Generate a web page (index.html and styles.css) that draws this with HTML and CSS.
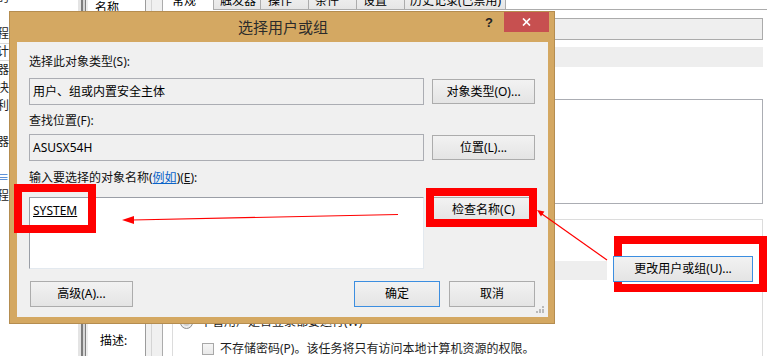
FILE: index.html
```html
<!DOCTYPE html>
<html>
<head>
<meta charset="utf-8">
<link rel="stylesheet" href="styles.css">
</head>
<body>
<div class="screen">
  <div class="bgwin">
    <div class="tree">
      <div class="trow">的</div>
      <div class="trow"></div>
      <div class="trow">程</div>
      <div class="trow sel">计</div>
      <div class="trow">器</div>
      <div class="trow">决</div>
      <div class="trow">利</div>
      <div class="trow"></div>
      <div class="trow">器</div>
      <div class="trow"></div>
      <div class="trow link">≡</div>
      <div class="trow">程</div>
    </div>
    <div class="split"></div>
    <div class="names">
      <div class="name-top">名称</div>
      <div class="name-bot">描述:</div>
    </div>
    <div class="vscroll"></div>
    <div class="props">
      <div class="tabs">
        <div class="tab active t1">常规</div>
        <div class="tab t2">触发器</div>
        <div class="tab t3">操作</div>
        <div class="tab t4">条件</div>
        <div class="tab t5">设置</div>
        <div class="tab t6">历史记录(已禁用)</div>
      </div>
      <div class="panel">
        <div class="field"></div>
        <div class="band"></div>
        <div class="box"></div>
        <div class="group">
          <div class="user-row">
            <div class="user-band"></div>
            <div class="btn change">更改用户或组(U)...</div>
          </div>
          <div class="opt radio-row"><span class="radio"></span><span>不管用户是否登录都要运行(W)</span></div>
          <div class="opt check-row"><span class="check"></span><span>不存储密码(P)。该任务将只有访问本地计算机资源的权限。</span></div>
        </div>
      </div>
    </div>
  </div>

  <div class="mark3"></div>

  <div class="dialog">
    <div class="titlebar">
      <div></div>
      <div class="title">选择用户或组</div>
      <div class="tb-controls">
        <span class="help">?</span>
        <span class="close"><svg width="9" height="8" viewBox="0 0 9 8"><path d="M1 0.5 L8 7.5 M8 0.5 L1 7.5" stroke="#fff" stroke-width="1.7"/></svg></span>
      </div>
    </div>
    <div class="dbody">
      <div class="lbl">选择此对象类型(S):</div>
      <div class="drow r1">
        <div class="tbox">用户、组或内置安全主体</div>
        <div class="btn">对象类型(O)...</div>
      </div>
      <div class="lbl lbl2">查找位置(F):</div>
      <div class="drow r2">
        <div class="tbox">ASUSX54H</div>
        <div class="btn">位置(L)...</div>
      </div>
      <div class="lbl lbl3">输入要选择的对象名称(<span class="lnk">例如</span>)(<u>E</u>):</div>
      <div class="drow r3">
        <div class="tarea"><span class="sys">SYSTEM</span></div>
        <div class="btn">检查名称(C)</div>
      </div>
      <div class="r4">
        <div class="btn adv">高级(A)...</div>
        <div class="btn ok">确定</div>
        <div class="btn cancel">取消</div>
      </div>
      <svg class="grip" width="9" height="7" viewBox="0 0 9 7">
        <rect x="6" y="0" width="2" height="2" fill="#b9b9b9"/>
        <rect x="3" y="3" width="2" height="2" fill="#b9b9b9"/>
        <rect x="6" y="3" width="2" height="2" fill="#b9b9b9"/>
        <rect x="0" y="5" width="2" height="2" fill="#b9b9b9"/>
        <rect x="3" y="5" width="2" height="2" fill="#b9b9b9"/>
        <rect x="6" y="5" width="2" height="2" fill="#b9b9b9"/>
      </svg>
    </div>
  </div>

  <svg class="annot" width="767" height="356" viewBox="0 0 767 356">
    <rect x="18" y="188" width="74" height="41" fill="none" stroke="#ff0000" stroke-width="8"/>
    <rect x="430" y="192" width="103" height="31" fill="none" stroke="#ff0000" stroke-width="8"/>
    <path d="M398 214.5 L132 220" stroke="#ff0000" stroke-width="1.2" fill="none"/>
    <polygon points="122,220 134,216 134,224" fill="#ff0000"/>
    <path d="M607 260 L542 214" stroke="#ff0000" stroke-width="1.2" fill="none"/>
    <polygon points="537,210 544.4,211.6 541,216.5" fill="#ff0000"/>
  </svg>
</div>
</body>
</html>
```

FILE: styles.css
```css
* { box-sizing: border-box; }
html, body { margin: 0; padding: 0; }
body {
  width: 767px;
  height: 356px;
  overflow: hidden;
  background: #fff;
  font-family: "Noto Sans", "Noto Sans CJK SC", sans-serif;
  font-size: 12px;
  color: #000;
}
.screen { position: relative; width: 767px; height: 356px; overflow: hidden; }

/* background window */
.bgwin { display: flex; height: 356px; }
.tree { width: 78px; flex: none; margin-top: -11px; overflow: hidden; }
.trow { height: 18px; line-height: 18px; margin-left: -3px; white-space: nowrap; color: #222; }
.trow.sel { border-top: 1px solid #dadada; border-bottom: 1px solid #dadada; line-height: 16px; }
.trow.link { color: #3a78d0; }
.split {
  width: 10px; flex: none;
  background: linear-gradient(to right, #e4e4e4 0 3px, #7d7d7d 3px 5px, #d6d6d6 5px 7px, #7d7d7d 7px 8px, #ededed 8px);
}
.names {
  width: 57px; flex: none;
  display: flex; flex-direction: column; justify-content: space-between;
  padding-bottom: 7px;
}
.name-top { line-height: 16px; padding-left: 7px; }
.name-bot { line-height: 16px; padding-left: 12px; }
.vscroll {
  width: 17px; flex: none;
  background: linear-gradient(to right, #f0f0f0 0 5px, #d4d4d4 5px 6px, #f0f0f0 6px);
  border-left: 1px solid #9c9c9c;
}
.props { flex: 1; display: flex; flex-direction: column; min-width: 0; }
.tabs { display: flex; height: 9px; align-items: flex-end; position: relative; z-index: 1; }
.tab {
  height: 19px; flex: none; line-height: 20px; padding-left: 6px; white-space: nowrap;
  background: linear-gradient(#f3f3f3, #e6e6e6);
  border: 1px solid #acacac; border-bottom: none; margin-right: -1px;
}
.tab.active { background: #fff; height: 20px; margin-bottom: -1px; position: relative; z-index: 1; }
.t1 { width: 52px; padding-left: 9px; }
.t2 { width: 48px; }
.t3 { width: 49px; padding-left: 7px; }
.t4 { width: 49px; }
.t5 { width: 49px; }
.t6 { width: 102px; padding-left: 5px; }
.panel {
  flex: 1;
  border-top: 1px solid #acacac; border-left: 1px solid #acacac;
  background: #fff;
  padding: 0 4px 0 9px;
  display: flex; flex-direction: column;
}
.field { margin-top: 8px; height: 22px; background: #efefef; border: 1px solid #ababab; flex: none; }
.band { margin-top: 7px; height: 20px; background: #eeeeee; flex: none; }
.box { margin-top: 32px; height: 105px; border: 1px solid #abadb3; flex: none; }
.group {
  margin-top: 15px; flex: 1;
  border: 1px solid #dcdcdc; border-bottom: none;
  padding: 36px 9px 0 7px;
}
.user-row { display: flex; align-items: flex-start; gap: 6px; height: 26px; }
.user-band { flex: 1; height: 19px; margin-top: 5px; background: #eeeeee; }
.opt { display: flex; align-items: center; height: 16px; line-height: 16px; color: #1e1e1e; white-space: nowrap; }
.radio-row { margin-top: 32px; gap: 7px; }
.radio {
  width: 13px; height: 13px; border-radius: 50%; flex: none;
  border: 1px solid #8c8c8c;
  background: radial-gradient(circle, #cfcfcf 0 3px, #ececec 4px);
}
.check-row { margin-top: 11px; padding-left: 22px; gap: 6px; }
.check { width: 12px; height: 12px; flex: none; border: 1px solid #a8a8a8; background: linear-gradient(#f6f6f6, #e9e9e9); }

/* buttons */
.btn {
  height: 25px;
  border: 1px solid #acacac;
  background: linear-gradient(#f2f2f2, #e4e4e4);
  display: flex; align-items: center; justify-content: center;
  line-height: 16px; white-space: nowrap; color: #000;
}
.btn.change { width: 140px; height: 26px; flex: none; border-color: #3c8ee0; position: relative; z-index: 2; }

/* annotation box under the change button */
.mark3 {
  position: absolute; left: 614px; top: 236px; width: 153px; height: 56px;
  border: 8px solid #ff0000; z-index: 1;
}

/* dialog */
.dialog {
  position: absolute; left: 9px; top: 11px; width: 546px; height: 313px; z-index: 3;
  background: #d4a862;
  border: 1px solid #b58d50;
  padding: 0 6px 6px 7px;
  display: flex; flex-direction: column;
}
.titlebar { height: 30px; flex: none; display: grid; grid-template-columns: 1fr auto 1fr; margin-right: -1px; }
.title {
  font-family: "Noto Sans CJK SC", sans-serif;
  font-size: 15px; line-height: 29px; color: #2b2b2b;
}
.tb-controls { display: flex; justify-content: flex-end; align-items: flex-start; }
.help {
  font-family: "Liberation Sans", sans-serif;
  font-weight: bold; font-size: 13px; line-height: 20px;
  margin-right: 11px; margin-top: 1px; color: #222;
}
.close {
  width: 45px; height: 20px; background: #c75050;
  display: flex; align-items: center; justify-content: center;
}
.close svg { display: block; }
.dbody {
  flex: 1; background: #f0f0f0;
  padding: 12px 13px 0 12px;
  position: relative;
  display: flex; flex-direction: column;
}
.lbl { line-height: 16px; color: #111; white-space: nowrap; }
.lbl2 { margin-top: 8px; }
.lbl3 { margin-top: 9px; }
.lnk { color: #0b64c8; text-decoration: underline; }
.drow { display: grid; grid-template-columns: 395px 103px; column-gap: 8px; align-items: center; }
.r1 { margin-top: 8px; }
.r2 { margin-top: 5px; }
.r3 { margin-top: 11px; align-items: start; }
.tbox {
  height: 27px; border: 1px solid #abadb3; background: #f0f0f0;
  line-height: 25px; padding-left: 3px; white-space: nowrap;
}
.tarea {
  height: 72px; background: #fff;
  border: 1px solid; border-color: #9a9ea6 #e3e9ef #e3e9ef #9a9ea6;
  padding: 5px 3px; line-height: 16px;
}
.sys { text-decoration: underline; }
.r4 { margin-top: 12px; display: flex; }
.adv { width: 103px; height: 26px; margin-left: 1px; }
.ok { width: 86px; height: 26px; margin-left: auto; border-color: #3c8ee0; }
.cancel { width: 86px; height: 26px; margin-left: 9px; }
.grip { position: absolute; right: 3px; bottom: 4px; display: block; }

/* annotations */
.annot { position: absolute; left: 0; top: 0; z-index: 4; pointer-events: none; display: block; }
```
